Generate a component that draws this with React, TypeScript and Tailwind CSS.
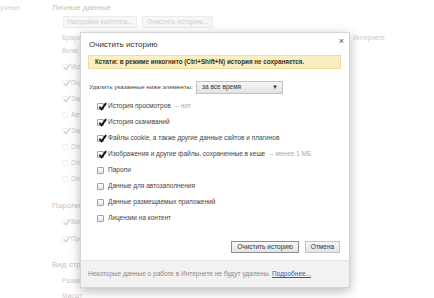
import React from "react";

const F = { fontFamily: '"Liberation Sans", Arial, sans-serif' };

function BgCheck({ on }: { on: boolean }) {
  return (
    <span className="relative flex h-[6px] w-[6px] shrink-0 items-center justify-center border border-[#f0f0f0] bg-white">
      {on && (
        <svg viewBox="0 0 10 10" className="absolute -top-[2px] left-0 h-[8px] w-[8px]">
          <path d="M1.5 5.5 L4 8 L9 1.5" stroke="#d4d4d4" strokeWidth="1.8" fill="none" />
        </svg>
      )}
    </span>
  );
}

function Check({ on }: { on: boolean }) {
  return (
    <span className="relative flex h-[7px] w-[7px] shrink-0 items-center justify-center rounded-[1px] border border-[#a0a0a0] bg-gradient-to-b from-white to-[#e4e4e4]">
      {on && (
        <svg viewBox="0 0 10 10" className="absolute -top-[2px] left-[0px] h-[9px] w-[9px]">
          <path d="M1.5 5.5 L4 8.2 L9 1.2" stroke="#111" strokeWidth="2.1" fill="none" />
        </svg>
      )}
    </span>
  );
}

const bgRows: [boolean, string][] = [
  [true, "Исп"],
  [true, "Под"],
  [true, "Защ"],
  [false, "Авт"],
  [true, "Защ"],
  [false, "Отп"],
  [false, "Ото"],
  [false, "Опт"],
];

const rows: [boolean, string, string?][] = [
  [true, "История просмотров", "нет"],
  [true, "История скачиваний"],
  [true, "Файлы cookie, а также другие данные сайтов и плагинов"],
  [true, "Изображения и другие файлы, сохраненные в кеше", "менее 1 МБ"],
  [false, "Пароли"],
  [false, "Данные для автозаполнения"],
  [false, "Данные размещаемых приложений"],
  [false, "Лицензии на контент"],
];

export default function App() {
  return (
    <div style={F} className="relative h-[298px] w-[434px] overflow-hidden bg-white">
      {/* background page */}
      <div className="flex h-full">
        <div className="w-[52px] shrink-0 pt-[3px] text-[7px] leading-[10px] text-[#d4d4d4]">учные</div>
        <div className="flex flex-col text-[6.5px] text-[#cbcbcb]">
          <div className="mt-[3px] h-[10px] text-[8px] leading-[10px] text-[#c4c4c4]">Личные данные</div>
          <div className="mt-[3px] ml-[11px] flex h-[13px] gap-[5px]">
            <div className="flex w-[74px] items-center justify-center border border-[#ececec] bg-[#f7f7f7] text-[#cfcfcf]">Настройки контента...</div>
            <div className="flex w-[71px] items-center justify-center border border-[#ececec] bg-[#f7f7f7] text-[#cfcfcf]">Очистить историю...</div>
          </div>
          <div className="mt-[5px] ml-[10px] flex h-[10px] items-center leading-[10px]">
            <span className="w-[18px] whitespace-nowrap">Брауз</span>
            <span className="ml-[273px] whitespace-nowrap">Интернете</span>
          </div>
          <div className="mt-[3px] ml-[10px] h-[10px] w-[18px] whitespace-nowrap leading-[10px]">Вклю</div>
          <div className="mt-[3px] flex flex-col">
            {bgRows.map(([on, t], i) => (
              <div key={i} className="ml-[10px] flex h-[16px] w-[18px] items-center gap-[3px]">
                <BgCheck on={on} />
                <span className="whitespace-nowrap">{t}</span>
              </div>
            ))}
          </div>
          <div className="mt-[14px] h-[10px] w-[28px] whitespace-nowrap text-[8px] leading-[10px] text-[#c4c4c4]">Пароли</div>
          <div className="mt-[3px] flex flex-col">
            {["Вкл", "Пре"].map((t, i) => (
              <div key={i} className="ml-[10px] flex h-[17px] w-[18px] items-center gap-[3px]">
                <BgCheck on={true} />
                <span className="whitespace-nowrap">{t}</span>
              </div>
            ))}
          </div>
          <div className="mt-[12px] h-[10px] w-[28px] whitespace-nowrap text-[8px] leading-[10px] text-[#c4c4c4]">Вид стр</div>
          <div className="mt-[6px] ml-[10px] h-[10px] w-[18px] whitespace-nowrap leading-[10px]">Разме</div>
          <div className="mt-[5px] ml-[10px] h-[10px] w-[18px] whitespace-nowrap leading-[10px]">Масшт</div>
        </div>
      </div>

      {/* dialog */}
      <div className="absolute left-[80px] top-[32px] flex h-[256px] w-[270px] flex-col border border-[#d4d4d4] bg-white shadow-[0_3px_10px_rgba(0,0,0,0.28)]">
        <div className="relative flex flex-1 flex-col px-[8px]">
          <div className="mt-[6px] h-[11px] text-[8px] leading-[11px] text-[#333]">Очистить историю</div>
          <div className="absolute right-[5px] top-[4px] text-[9px] leading-[9px] text-[#555]">×</div>
          <div className="mt-[5px] ml-[-1px] flex h-[14px] w-[253px] items-center border border-[#efdc9c] bg-[#f9efc2] pl-[6px] text-[6.3px] font-bold text-[#3a3320]">
            Кстати: в режиме инкогнито (Ctrl+Shift+N) история не сохраняется.
          </div>
          <div className="mt-[11px] flex h-[14px] items-center text-[#444]">
            <span className="w-[107px] whitespace-nowrap text-[6.2px]">Удалить указанные ниже элементы:</span>
            <div className="flex h-[13px] w-[87px] items-center justify-between border border-[#c2c2c2] bg-gradient-to-b from-[#f6f6f6] to-[#e2e2e2] pl-[5px] pr-[4px] text-[6.5px] text-[#333]">
              <span>за все время</span>
              <span className="text-[6px]">▼</span>
            </div>
          </div>
          <div className="mt-[4px] flex flex-col">
            {rows.map(([on, t, extra], i) => (
              <div key={i} className="ml-[8px] flex h-[16px] items-center gap-[3px] text-[6.5px] text-[#444]">
                <Check on={on} />
                <span className="ml-[1px]">{t}</span>
                {extra && <span className="text-[#aaa]">&nbsp;– {extra}</span>}
              </div>
            ))}
          </div>
          <div className="flex-1" />
          <div className="mb-[7px] flex justify-end gap-[6px] pr-[1px] text-[6.5px] text-[#333]">
            <div className="flex h-[12px] w-[68px] items-center justify-center border border-[#8c8c8c] bg-gradient-to-b from-[#f8f8f8] to-[#e4e4e4]">Очистить историю</div>
            <div className="flex h-[12px] w-[35px] items-center justify-center border border-[#c2c2c2] bg-gradient-to-b from-[#f8f8f8] to-[#e4e4e4]">Отмена</div>
          </div>
        </div>
        <div className="flex h-[27px] items-center border-t border-[#e3e3e3] bg-[#f2f2f2] px-[7px] text-[6.5px] text-[#8a8a8a]">
          <span>Некоторые данные о работе в Интернете не будут удалены.&nbsp;</span>
          <span className="text-[#2a5db0] underline">Подробнее...</span>
        </div>
      </div>
    </div>
  );
}
